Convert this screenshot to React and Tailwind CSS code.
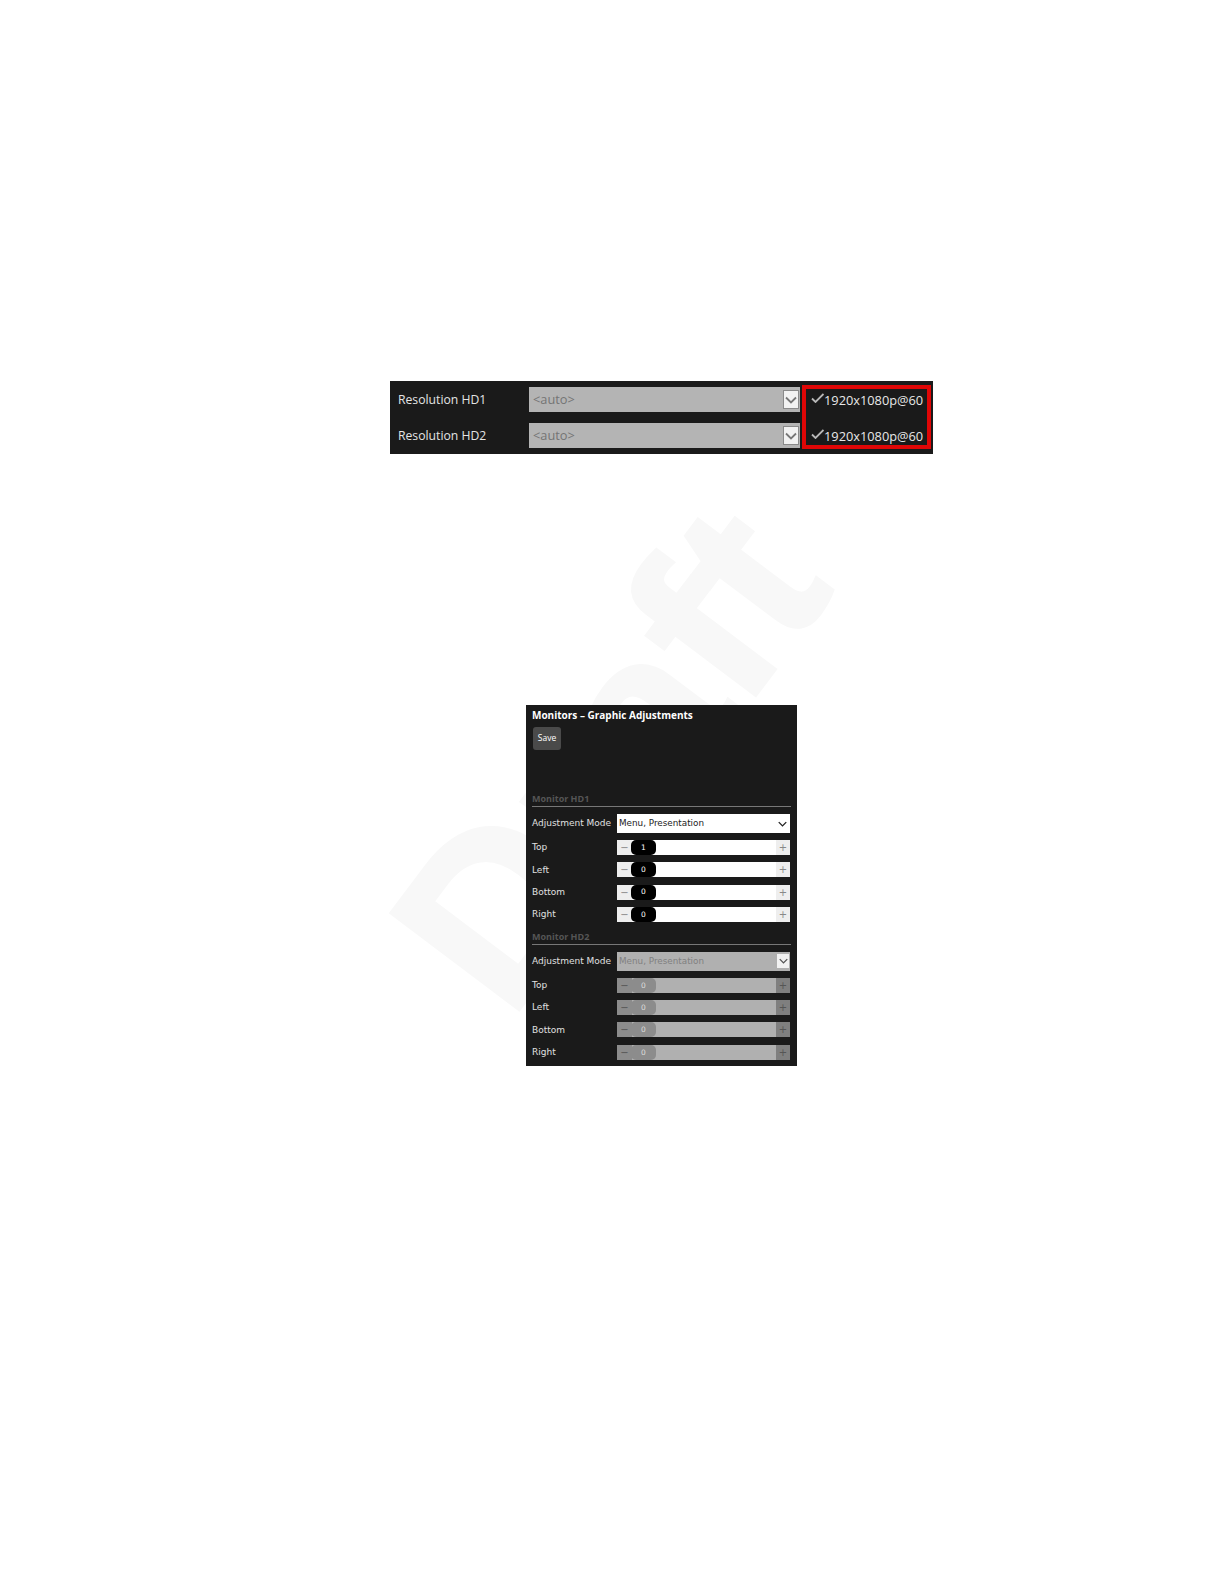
import React from "react";

const panelFont = { fontFamily: '"DejaVu Sans", sans-serif' };
const headFont = { fontFamily: '"Open Sans", sans-serif' };

function Chevron({ className }) {
  return (
    <svg viewBox="0 0 12 8" className={className} fill="none" stroke="currentColor" strokeWidth="1.8">
      <path d="M1 1.5 L6 6.5 L11 1.5" />
    </svg>
  );
}

function Tick() {
  return (
    <svg viewBox="0 0 13 10" className="w-[13px] h-[10px] text-[#b8b8b8] mb-[6px] shrink-0" fill="none" stroke="currentColor" strokeWidth="1.8">
      <path d="M1 5.5 L4.5 9 L12.5 1" />
    </svg>
  );
}

function ResolutionRow({ label }) {
  return (
    <div className="flex items-center h-[25px]">
      <div className="w-[139px] pl-[8px] pt-px text-[12.2px] text-[#e4e4e4]">{label}</div>
      <div className="w-[271px] h-[25px] bg-[#b4b4b4] flex items-center justify-between pl-[4px] pr-px">
        <span className="text-[12.8px] text-[#757575]">{"<auto>"}</span>
        <span className="w-[16px] h-[19px] bg-[#f2f2f2] border border-[#8a8a8a] flex items-center justify-center text-[#777]">
          <Chevron className="w-[12px] h-[8px]" />
        </span>
      </div>
    </div>
  );
}

function Slider({ value, disabled }) {
  return (
    <div className={`relative w-[173px] h-[15px] flex justify-between items-center ${disabled ? "bg-[#b0b0b0]" : "bg-white"}`}>
      <span className={`w-[15px] h-full flex items-center justify-center text-[10px] ${disabled ? "bg-[#8c8c8c] text-[#555]" : "bg-[#eeeeee] text-[#888]"}`}>−</span>
      <span className={`absolute left-[14px] top-0 w-[25px] h-[15px] rounded-[5px] flex items-center justify-center text-[7.5px] ${disabled ? "bg-[#8c8c8c] text-[#ddd]" : "bg-black text-white"}`}>{value}</span>
      <span className={`w-[14px] h-full flex items-center justify-center text-[10px] ${disabled ? "bg-[#7f7f7f] text-[#555]" : "bg-[#eeeeee] text-[#888]"}`}>+</span>
    </div>
  );
}

function Monitor({ title, values, disabled }) {
  const names = ["Top", "Left", "Bottom", "Right"];
  return (
    <div>
      <div className="h-[14px] font-bold text-[9px] leading-[14px] text-[#555]" style={headFont}>{title}</div>
      <div className="h-px w-[259px] bg-[#777]"></div>
      <div className="flex items-center mt-[7px] h-[19px]">
        <div className="w-[85px] pt-px text-[9px] text-[#e0e0e0]">Adjustment Mode</div>
        {disabled ? (
          <div className="w-[173px] h-[19px] bg-[#b0b0b0] flex items-center justify-between pl-[2px] pr-px text-[8.8px] text-[#808080]">
            <span className="pt-px">Menu, Presentation</span>
            <span className="w-[12px] h-[14px] bg-[#f2f2f2] flex items-center justify-center text-[#555]">
              <Chevron className="w-[9px] h-[6px]" />
            </span>
          </div>
        ) : (
          <div className="w-[173px] h-[19px] bg-white flex items-center justify-between pl-[2px] pr-[3px] text-[8.8px] text-[#222]">
            <span className="pt-px">Menu, Presentation</span>
            <Chevron className="w-[9px] h-[6px] text-[#222]" />
          </div>
        )}
      </div>
      <div className="flex flex-col gap-[7.3px] mt-[7px]">
        {names.map((n) => (
          <div key={n} className="flex items-center h-[15px]">
            <div className="w-[85px] pt-px text-[9px] text-[#e0e0e0]">{n}</div>
            <Slider value={n === "Top" && !disabled ? values[0] : values[1]} disabled={disabled} />
          </div>
        ))}
      </div>
    </div>
  );
}

export default function App() {
  return (
    <div className="relative w-[1224px] h-[1584px] bg-white overflow-hidden pt-[381px]">
      {/* watermark */}
      <div
        className="absolute left-[338px] top-[641px] text-[232px] leading-none font-bold text-[#f8f8f8] [-webkit-text-stroke:4px_#f8f8f8] -rotate-[53deg] origin-center select-none"
        style={{ fontFamily: '"Liberation Sans", sans-serif' }}
      >
        Draft
      </div>

      <div className="relative ml-[390px] w-[543px] h-[73px] bg-[#1a1a1a] pt-[6px]" style={headFont}>
        <div className="flex flex-col gap-[11px]">
          <ResolutionRow label="Resolution HD1" />
          <ResolutionRow label="Resolution HD2" />
        </div>
        {/* red highlight */}
        <div className="absolute left-[412px] top-[4px] w-[129px] h-[64px] border-[4px] border-[#e00606] flex flex-col gap-[12px] pl-[5px] text-[12.8px] text-[#e8e8e8]">
          <div className="flex items-center h-[24px] shrink-0"><Tick />1920x1080p@60</div>
          <div className="flex items-center h-[24px] shrink-0"><Tick />1920x1080p@60</div>
        </div>
      </div>

      <div className="relative ml-[526px] mt-[251px] w-[271px] h-[361px] bg-[#1a1a1a] px-[6px]" style={panelFont}>
        <div className="h-[22px] pt-[3px] text-[10px] leading-[14px] font-bold text-white" style={headFont}>Monitors – Graphic Adjustments</div>
        <div className="ml-px w-[28px] h-[23px] bg-[#4a4a4a] rounded-[3px] flex items-center justify-center text-[8.5px] text-white" style={headFont}>Save</div>
        <div className="mt-[42px] flex flex-col gap-[8px]">
          <Monitor title="Monitor HD1" values={["1", "0"]} />
          <Monitor title="Monitor HD2" values={["0", "0"]} disabled />
        </div>
      </div>
    </div>
  );
}
